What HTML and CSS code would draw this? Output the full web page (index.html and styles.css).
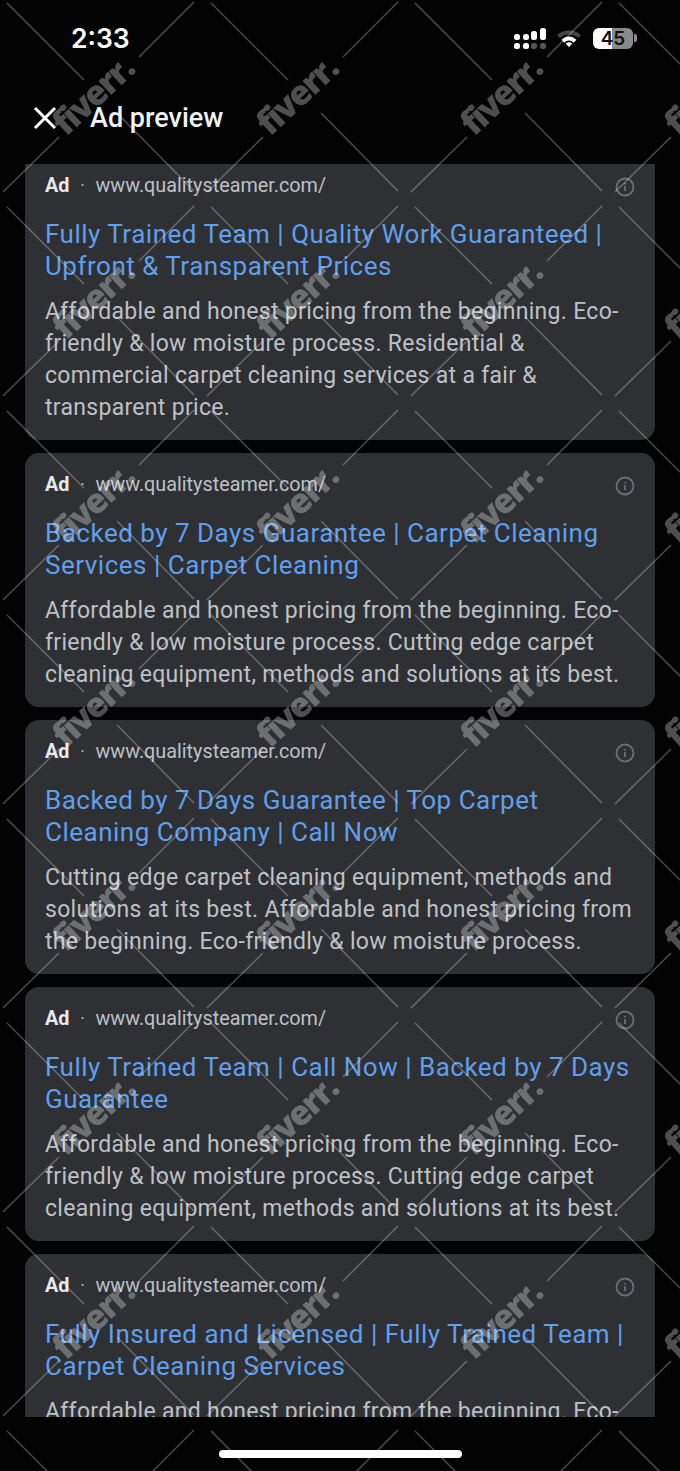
FILE: index.html
```html
<!DOCTYPE html>
<html lang="en">
  <head>
    <meta charset="UTF-8" />
    <meta name="viewport" content="width=device-width, initial-scale=1.0" />
    <title>Ad preview</title>
    <link rel="stylesheet" href="styles.css">
  </head>
  <body>
    <div id="page">
      <div class="status-bar">
        <span class="clock">2:33</span>
        <div class="status-icons">
          <svg class="signal" width="33" height="23" viewBox="0 0 33 23">
            <g fill="#fff">
              <rect x="1" y="7" width="6" height="6" rx="2.500" />
              <rect x="1" y="16" width="6" height="6" rx="2.500" />
              <rect x="10" y="7" width="6" height="6" rx="2.500" />
              <rect x="10" y="16" width="6" height="6" rx="2.500" />
              <rect x="18" y="4" width="6" height="9" rx="2.500" />
              <rect x="27" y="1" width="6" height="12" rx="2.500" />
            </g>
            <g fill="#555">
              <rect x="18" y="16" width="6" height="6" rx="2.500" />
              <rect x="27" y="16" width="6" height="6" rx="2.500" />
            </g>
          </svg>
          <svg class="wifi" width="26" height="20" viewBox="0 0 28 20">
            <path d="M1 7 C8 0 20 0 27 7 L24 10 C18 5 10 5 4 10 Z" fill="#444" />
            <path d="M6 12 C11 7 17 7 22 12 L19 15 C16 12 12 12 9 15 Z" fill="#fff" />
            <path d="M10.500 16 C12.500 14 15.500 14 17.500 16 L14 20 Z" fill="#fff" />
          </svg>
          <div class="battery">
            <div class="battery-body"><span>45</span></div>
            <div class="battery-tip"></div>
          </div>
        </div>
      </div>

      <div class="top-bar">
        <svg class="close" width="24" height="24" viewBox="0 0 24 24">
          <path d="M2 2 L22 22 M22 2 L2 22" stroke="#fff" stroke-width="3" fill="none" />
        </svg>
        <h1>Ad preview</h1>
      </div>

      <div id="results">
        <div class="ad ad-first">
          <div class="ad-meta"><b>Ad</b><i>•</i><span>www.qualitysteamer.com/</span>
            <svg class="info" width="20" height="20" viewBox="0 0 20 20"><circle cx="10" cy="10" r="8.500" /><path d="M10 9 V14 M10 6 V7.500" /></svg>
          </div>
          <h2>Fully Trained Team | Quality Work Guaranteed | Upfront &amp; Transparent Prices</h2>
          <p>Affordable and honest pricing from the beginning. Eco-friendly &amp; low moisture process. Residential &amp; commercial carpet cleaning services at a fair &amp; transparent price.</p>
        </div>

        <div class="ad">
          <div class="ad-meta"><b>Ad</b><i>•</i><span>www.qualitysteamer.com/</span>
            <svg class="info" width="20" height="20" viewBox="0 0 20 20"><circle cx="10" cy="10" r="8.500" /><path d="M10 9 V14 M10 6 V7.500" /></svg>
          </div>
          <h2>Backed by 7 Days Guarantee | Carpet Cleaning Services | Carpet Cleaning</h2>
          <p>Affordable and honest pricing from the beginning. Eco-friendly &amp; low moisture process. Cutting edge carpet cleaning equipment, methods and solutions at its best.</p>
        </div>

        <div class="ad">
          <div class="ad-meta"><b>Ad</b><i>•</i><span>www.qualitysteamer.com/</span>
            <svg class="info" width="20" height="20" viewBox="0 0 20 20"><circle cx="10" cy="10" r="8.500" /><path d="M10 9 V14 M10 6 V7.500" /></svg>
          </div>
          <h2>Backed by 7 Days Guarantee | Top Carpet Cleaning Company | Call Now</h2>
          <p>Cutting edge carpet cleaning equipment, methods and solutions at its best. Affordable and honest pricing from the beginning. Eco-friendly &amp; low moisture process.</p>
        </div>

        <div class="ad">
          <div class="ad-meta"><b>Ad</b><i>•</i><span>www.qualitysteamer.com/</span>
            <svg class="info" width="20" height="20" viewBox="0 0 20 20"><circle cx="10" cy="10" r="8.500" /><path d="M10 9 V14 M10 6 V7.500" /></svg>
          </div>
          <h2>Fully Trained Team | Call Now | Backed by 7 Days Guarantee</h2>
          <p>Affordable and honest pricing from the beginning. Eco-friendly &amp; low moisture process. Cutting edge carpet cleaning equipment, methods and solutions at its best.</p>
        </div>

        <div class="ad">
          <div class="ad-meta"><b>Ad</b><i>•</i><span>www.qualitysteamer.com/</span>
            <svg class="info" width="20" height="20" viewBox="0 0 20 20"><circle cx="10" cy="10" r="8.500" /><path d="M10 9 V14 M10 6 V7.500" /></svg>
          </div>
          <h2>Fully Insured and Licensed | Fully Trained Team | Carpet Cleaning Services</h2>
          <p>Affordable and honest pricing from the beginning. Eco-friendly &amp; low moisture process.</p>
        </div>
      </div>

      <div class="home-area"><div class="home-bar"></div></div>

      <!-- watermark sits on top of the whole screenshot -->
      <svg class="watermark" width="680" height="1471">
        <defs>
          <pattern id="wm" width="204" height="204" patternUnits="userSpaceOnUse">
            <path class="wm-line" d="M7 3 L84 80 M139 57 L194 2 M117 113 L194 191 M3 192 L59 137" />
            <text class="wm-text" transform="translate(66 137) rotate(-43)">fiverr<tspan class="wm-dot">.</tspan></text>
          </pattern>
        </defs>
        <rect width="680" height="1471" fill="url(#wm)" />
      </svg>
    </div>
  </body>
</html>
```

FILE: styles.css
```css
html,
body {
  margin: 0;
  padding: 0;
  background: #000;
}
#page {
  position: relative;
  width: 680px;
  height: 1471px;
  overflow: hidden;
  background: #030303;
  color: #fff;
  font-family: Roboto, "Liberation Sans", sans-serif;
}

/* Status bar */
.status-bar {
  height: 76px;
  display: flex;
  justify-content: space-between;
  align-items: center;
  padding: 0 43px 0 71px;
  box-sizing: border-box;
}
.clock {
  font: 600 26.500px Inter, sans-serif;
}
.status-icons {
  display: flex;
  align-items: center;
  gap: 10px;
}
.battery {
  display: flex;
  align-items: center;
  gap: 1px;
  margin-left: 1px;
}
.battery-body {
  width: 40px;
  height: 21px;
  border-radius: 6px;
  background: linear-gradient(90deg, #fff 0, #fff 47%, #8a8a8a 47%, #8a8a8a 100%);
  color: #111;
  font: 600 19px/21px Inter, sans-serif;
  text-align: center;
}
.battery-tip {
  width: 3px;
  height: 8px;
  border-radius: 0 2px 2px 0;
  background: #8a8a8a;
}

/* Top bar */
.top-bar {
  height: 88px;
  display: flex;
  align-items: center;
  padding: 0 0 4px 33px;
  gap: 33px;
  box-sizing: border-box;
}
.top-bar h1 {
  margin: 0;
  font: 500 27px Roboto, sans-serif;
  color: #f1f3f4;
}

/* Results */
#results {
  height: 1253px;
  overflow: hidden;
  padding: 0 25px;
  display: flex;
  flex-direction: column;
  gap: 13px;
}
.ad {
  flex: none;
  background: #2f3033;
  border-radius: 14px;
  padding: 18px 20px 16px;
}
.ad-first {
  margin-top: -10px;
  border-radius: 0 0 14px 14px;
}
.ad-meta {
  display: flex;
  align-items: center;
  height: 26px;
  font-size: 19.800px;
  color: #bdc1c6;
}
.ad-meta b {
  color: #e8eaed;
  font-weight: 700;
}
.ad-meta i {
  font-style: normal;
  font-size: 9px;
  margin: 0 11.500px;
}
.info {
  margin-left: auto;
  margin-top: 3px;
  fill: none;
  stroke: #6b6f74;
  stroke-width: 1.800;
}
.ad h2 {
  margin: 20px 0 14px;
  font-size: 26px;
  line-height: 32px;
  font-weight: 400;
  letter-spacing: 0.5px;
  color: #5f9fec;
}
.ad p {
  margin: 0;
  font-size: 23px;
  line-height: 32px;
  letter-spacing: 0.3px;
  color: #bdc1c6;
}

/* Home indicator */
.home-area {
  height: 54px;
  display: flex;
  justify-content: center;
  padding-top: 33px;
  box-sizing: border-box;
}
.home-bar {
  width: 243px;
  height: 8px;
  border-radius: 4px;
  background: #fff;
}

/* Watermark */
.watermark {
  position: absolute;
  left: 0;
  top: 0;
  pointer-events: none;
}
.wm-line {
  stroke: #fff;
  stroke-opacity: 0.28;
  stroke-width: 1.500;
  fill: none;
}
.wm-text {
  font: 800 34px "Open Sans", sans-serif;
  letter-spacing: -1.800px;
  fill: #fff;
  fill-opacity: 0.3;
}
```
